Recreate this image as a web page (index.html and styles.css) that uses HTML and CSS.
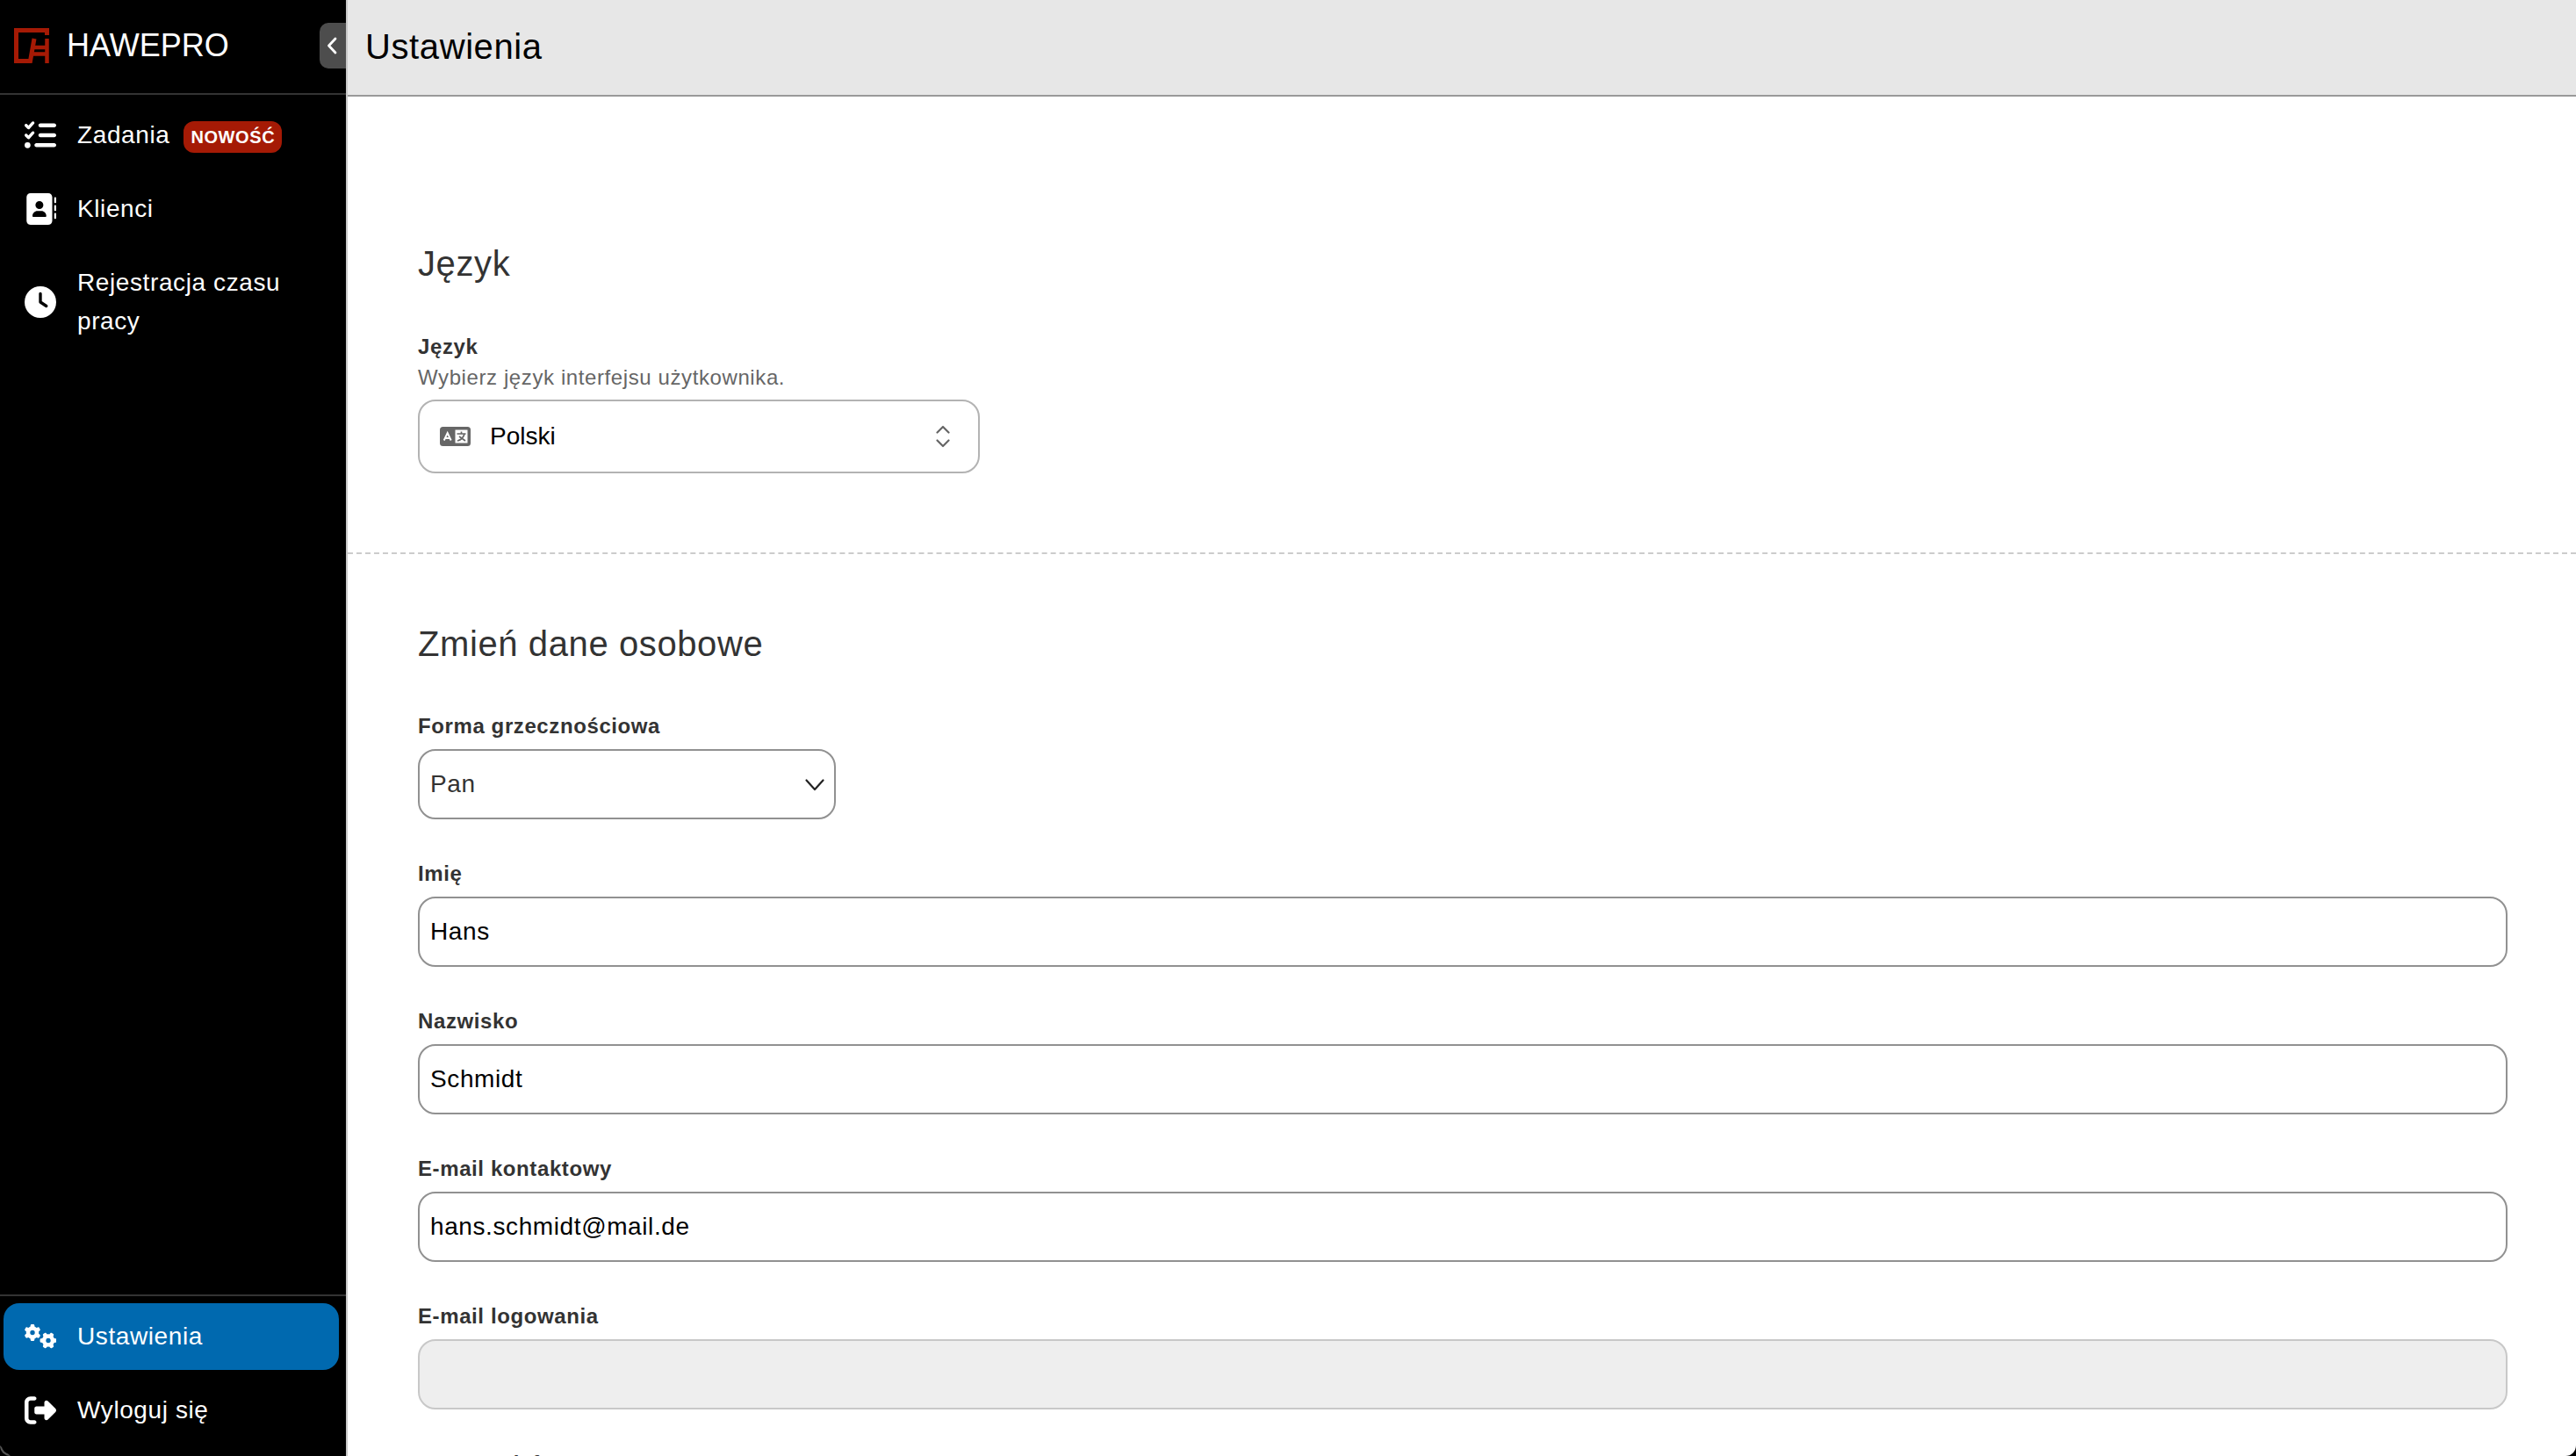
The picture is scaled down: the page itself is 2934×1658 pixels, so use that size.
FILE: index.html
```html
<!DOCTYPE html>
<html lang="pl">
<head>
    <meta charset="UTF-8">
    <meta name="viewport" content="width=device-width, initial-scale=1.0">
    <title>Ustawienia - HAWEPRO</title>
    <link rel="stylesheet" href="styles.css">
</head>
<body>
    <div class="app">
        <aside class="sidebar">
            <div class="brand">
                <svg class="logo" viewBox="0 0 40 40" fill="none" stroke="currentColor" stroke-width="5">
                    <path d="M37.5 8V2.5H2.5v35h16l4.5-25.5"/>
                    <path d="M37.5 12v28M21 22h16M20 29.500h17" stroke-width="4.500"/>
                </svg>
                <span class="brand-name">HAWEPRO</span>
                <button class="toggle" type="button" aria-label="Zwiń menu">
                    <svg viewBox="0 0 12 20" fill="none" stroke="currentColor" stroke-width="2.800" stroke-linecap="round" stroke-linejoin="round"><path d="M10 2L2.500 10l7.500 8"/></svg>
                </button>
            </div>
            <nav class="nav">
                <a class="nav-item" href="#">
                    <svg class="nav-icon" viewBox="0 0 512 512" fill="currentColor"><path d="M152.1 38.2c9.9 8.9 10.7 24 1.8 33.9l-72 80c-4.4 4.9-10.6 7.8-17.2 7.900s-12.900-2.400-17.600-7L7 113C-2.300 103.600-2.300 88.400 7 79s24.600-9.400 33.900 0l22.100 22.100 55.100-61.200c8.900-9.900 24-10.700 33.900-1.800zm0 160c9.900 8.900 10.700 24 1.800 33.900l-72 80c-4.400 4.900-10.600 7.800-17.200 7.900s-12.900-2.400-17.600-7L7 273c-9.400-9.400-9.400-24.600 0-33.900s24.600-9.400 33.900 0l22.100 22.100 55.100-61.200c8.900-9.900 24-10.700 33.900-1.800zM224 96c0-17.700 14.300-32 32-32H480c17.700 0 32 14.300 32 32s-14.300 32-32 32H256c-17.700 0-32-14.300-32-32zm0 160c0-17.700 14.300-32 32-32H480c17.700 0 32 14.300 32 32s-14.300 32-32 32H256c-17.700 0-32-14.300-32-32zM160 416c0-17.700 14.300-32 32-32H480c17.700 0 32 14.300 32 32s-14.300 32-32 32H192c-17.700 0-32-14.300-32-32zM48 368a48 48 0 1 1 0 96 48 48 0 1 1 0-96z"/></svg>
                    <span>Zadania</span>
                    <span class="badge">NOWOŚĆ</span>
                </a>
                <a class="nav-item" href="#">
                    <svg class="nav-icon" viewBox="0 0 512 512" fill="currentColor"><path d="M96 0C60.700 0 32 28.700 32 64V448c0 35.300 28.700 64 64 64H384c35.300 0 64-28.700 64-64V64c0-35.300-28.700-64-64-64H96zM208 288h64c44.200 0 80 35.800 80 80c0 8.800-7.200 16-16 16H144c-8.800 0-16-7.200-16-16c0-44.200 35.800-80 80-80zm-32-96a64 64 0 1 1 128 0 64 64 0 1 1 -128 0zM512 80c0-8.800-7.200-16-16-16s-16 7.200-16 16v64c0 8.800 7.200 16 16 16s16-7.200 16-16V80zM496 192c-8.800 0-16 7.200-16 16v64c0 8.800 7.200 16 16 16s16-7.200 16-16V208c0-8.800-7.200-16-16-16zm16 144c0-8.800-7.200-16-16-16s-16 7.200-16 16v64c0 8.800 7.200 16 16 16s16-7.200 16-16V336z"/></svg>
                    <span>Klienci</span>
                </a>
                <a class="nav-item" href="#">
                    <svg class="nav-icon" viewBox="0 0 512 512" fill="currentColor"><path d="M256 0a256 256 0 1 1 0 512A256 256 0 1 1 256 0zM232 120V256c0 8 4 15.500 10.700 20l96 64c11 7.400 25.900 4.400 33.300-6.700s4.400-25.900-6.700-33.300L280 243.200V120c0-13.300-10.700-24-24-24s-24 10.700-24 24z"/></svg>
                    <span>Rejestracja czasu pracy</span>
                </a>
            </nav>
            <nav class="nav nav-bottom">
                <a class="nav-item active" href="#">
                    <svg class="nav-icon" viewBox="0 0 640 512" fill="currentColor">
                        <defs>
                            <path id="gear" d="M308.500 135.300c7.100-6.300 9.900-16.200 6.200-25c-2.300-5.300-4.800-10.500-7.600-15.500L304 89.400c-3-5-6.300-9.900-9.800-14.600c-5.700-7.600-15.700-10.100-24.700-7.100l-28.200 9.300c-10.700-8.800-23-16-36.200-20.900L199 27.100c-1.900-9.300-9.100-16.700-18.500-17.800C173.900 8.400 167.200 8 160.400 8h-.7c-6.800 0-13.500 .4-20.100 1.200c-9.400 1.100-16.600 8.600-18.500 17.800L115 56.100c-13.300 5-25.500 12.100-36.200 20.900L50.500 67.800c-9-3-19-.5-24.700 7.100c-3.500 4.700-6.800 9.600-9.900 14.600l-3 5.300c-2.800 5-5.300 10.200-7.600 15.600c-3.700 8.700-.9 18.600 6.200 25l22.200 19.800C32.600 161.900 32 168.900 32 176s.6 14.100 1.700 20.900L11.500 216.700c-7.100 6.300-9.900 16.200-6.200 25c2.300 5.300 4.800 10.500 7.600 15.600l3 5.200c3 5.100 6.300 9.900 9.900 14.600c5.700 7.600 15.700 10.100 24.700 7.100l28.200-9.300c10.700 8.800 23 16 36.200 20.900l6.100 29.100c1.900 9.300 9.100 16.700 18.500 17.800c6.700 .8 13.500 1.200 20.400 1.200s13.700-.4 20.400-1.200c9.400-1.100 16.600-8.600 18.500-17.800l6.100-29.100c13.300-5 25.500-12.100 36.200-20.900l28.200 9.300c9 3 19 .5 24.700-7.100c3.500-4.700 6.800-9.500 9.800-14.600l3.100-5.400c2.800-5 5.300-10.200 7.600-15.500c3.700-8.700 .9-18.600-6.200-25l-22.200-19.800c1.100-6.800 1.700-13.800 1.700-20.900s-.6-14.100-1.700-20.900l22.200-19.800zM112 176a48 48 0 1 1 96 0 48 48 0 1 1 -96 0z"/>
                        </defs>
                        <use href="#gear"/>
                        <use href="#gear" transform="translate(480 336) rotate(90) translate(-160 -176)"/>
                    </svg>
                    <span>Ustawienia</span>
                </a>
                <a class="nav-item" href="#">
                    <svg class="nav-icon" viewBox="0 0 512 512" fill="currentColor"><path d="M377.900 105.900L500.700 228.700c7.200 7.200 11.300 17.100 11.300 27.300s-4.100 20.100-11.300 27.300L377.900 406.100c-6.400 6.400-15 9.900-24 9.900c-18.700 0-33.900-15.200-33.900-33.900l0-62.100-128 0c-17.700 0-32-14.300-32-32l0-64c0-17.700 14.300-32 32-32l128 0 0-62.100c0-18.700 15.200-33.900 33.900-33.900c9 0 17.600 3.600 24 9.900zM160 96L96 96c-17.700 0-32 14.300-32 32l0 256c0 17.700 14.300 32 32 32l64 0c17.700 0 32 14.300 32 32s-14.300 32-32 32l-64 0c-53 0-96-43-96-96L0 128C0 75 43 32 96 32l64 0c17.700 0 32 14.300 32 32s-14.300 32-32 32z"/></svg>
                    <span>Wyloguj się</span>
                </a>
            </nav>
        </aside>

        <main class="main">
            <header class="topbar">
                <h1>Ustawienia</h1>
            </header>

            <section class="section section-language">
                <h2>Język</h2>
                <div class="field">
                    <div class="label">Język</div>
                    <div class="hint">Wybierz język interfejsu użytkownika.</div>
                    <button class="lang-select" type="button">
                        <svg class="lang-icon" viewBox="0 0 35 22">
                            <rect width="35" height="22" rx="3.500" fill="#666"/>
                            <rect x="17.500" y="3.500" width="14" height="15" fill="#fff"/>
                            <path d="M4.700 15.500L8.700 7l4 8.500M6 13h5.400" fill="none" stroke="#fff" stroke-width="2"/>
                            <path d="M19.500 8h10M24.500 5.500V8M28 8c-1 4-4 7-8 8M22 11l7 5" fill="none" stroke="#666" stroke-width="1.700"/>
                        </svg>
                        <span>Polski</span>
                        <svg class="lang-arrows" viewBox="0 0 16 26" fill="none" stroke="#666" stroke-width="2.200" stroke-linecap="round" stroke-linejoin="round"><path d="M1.500 8.500L8 2l6.500 6.500M1.500 17.500L8 24l6.500-6.500"/></svg>
                    </button>
                </div>
            </section>

            <section class="section">
                <h2>Zmień dane osobowe</h2>
                <div class="field">
                    <div class="label">Forma grzecznościowa</div>
                    <div class="input select">
                        <span>Pan</span>
                        <svg class="select-arrow" viewBox="0 0 22 14" fill="none" stroke="#222" stroke-width="2.200" stroke-linecap="round" stroke-linejoin="round"><path d="M1.500 1.500L11 12l9.500-10.500"/></svg>
                    </div>
                </div>
                <div class="field">
                    <label class="label" for="firstName">Imię</label>
                    <input class="input" id="firstName" type="text" value="Hans">
                </div>
                <div class="field">
                    <label class="label" for="lastName">Nazwisko</label>
                    <input class="input" id="lastName" type="text" value="Schmidt">
                </div>
                <div class="field">
                    <label class="label" for="contactEmail">E-mail kontaktowy</label>
                    <input class="input" id="contactEmail" type="text" value="hans.schmidt@mail.de">
                </div>
                <div class="field">
                    <label class="label" for="loginEmail">E-mail logowania</label>
                    <input class="input" id="loginEmail" type="text" disabled>
                </div>
                <div class="field">
                    <label class="label" for="phone">Numer telefonu</label>
                    <input class="input" id="phone" type="text">
                </div>
            </section>
        </main>
    </div>
</body>
</html>
```
FILE: styles.css
```css
* {
    box-sizing: border-box;
}
body {
    margin: 0;
    background-color: #000;
    font-family: "Liberation Sans", Arial, Helvetica, sans-serif;
    font-size: 28px;
    letter-spacing: 0.6px;
    color: #333;
}
.app {
    display: flex;
    height: 100vh;
    overflow: hidden;
}

/* Sidebar */
.sidebar {
    position: relative;
    display: flex;
    flex-direction: column;
    flex: 0 0 396px;
    background-color: #000;
    border-right: 2px solid #c8c8c8;
    color: #fff;
}
/* rounded window corner */
.sidebar::after {
    content: "";
    position: absolute;
    left: 0;
    bottom: 0;
    width: 12px;
    height: 12px;
    border-left: 2px solid #555;
    border-bottom: 2px solid #555;
    border-bottom-left-radius: 12px;
    clip-path: polygon(0 15%, 85% 100%, 0 100%);
}
.brand {
    display: flex;
    align-items: center;
    height: 108px;
    padding: 0 0 2px 16px;
    border-bottom: 2px solid #333;
}
.logo {
    width: 40px;
    height: 40px;
    margin-right: 20px;
    color: #a51a05;
}
.brand-name {
    font-size: 36px;
    line-height: 48px;
    margin-top: -1px;
    letter-spacing: 0;
}
.toggle {
    display: flex;
    align-items: center;
    width: 30px;
    height: 52px;
    margin-left: auto;
    padding: 0 0 0 8px;
    border: none;
    border-radius: 10px 0 0 10px;
    background-color: #4d4d4d;
    color: #fff;
}
.toggle svg {
    width: 12px;
    height: 20px;
}
.nav {
    display: flex;
    flex-direction: column;
    gap: 8px;
    padding: 8px 8px 8px 4px;
}
.nav-bottom {
    margin-top: auto;
    padding-bottom: 14px;
    border-top: 2px solid #333;
}
.nav-item {
    display: flex;
    align-items: center;
    padding: 16px 24px;
    border-radius: 18px;
    color: #fff;
    line-height: 44px;
    text-decoration: none;
}
.nav-item.active {
    background-color: #0069af;
}
.nav-icon {
    flex: none;
    width: 36px;
    height: 36px;
    margin-right: 24px;
}
.badge {
    margin: 4px 0 0 16px;
    padding: 0 8px;
    border-radius: 12px;
    background-color: #a51a05;
    font-size: 20px;
    font-weight: bold;
    line-height: 36px;
}

/* Content */
.main {
    flex: 1;
    min-width: 0;
    overflow: hidden;
    background-color: #fff;
    border-bottom-right-radius: 12px;
}
.topbar {
    height: 110px;
    padding-left: 20px;
    background-color: #e7e7e7;
    border-bottom: 2px solid #999;
    color: #000;
}
h1, h2 {
    margin: 0;
    font-size: 40px;
    font-weight: normal;
}
h1 {
    line-height: 106px;
}
.section {
    padding: 80px 78px 80px 80px;
}
.section-language {
    padding-top: 168px;
    padding-bottom: 90px;
    border-bottom: 2px dashed #ccc;
}
h2 {
    margin-bottom: 54px;
    line-height: 44px;
}
.field + .field {
    margin-top: 44px;
}
.label {
    display: block;
    margin-bottom: 8px;
    font-size: 24px;
    font-weight: bold;
    line-height: 36px;
}
.section-language .label {
    margin: 55px 0 -1px;
}
.section-language h2 {
    margin-bottom: 0;
}
.hint {
    margin-bottom: 7px;
    color: #666;
    font-size: 24px;
    line-height: 36px;
}
.input {
    display: block;
    width: 100%;
    height: 80px;
    padding: 0 12px;
    border: 2px solid #919191;
    border-radius: 20px;
    background-color: #fff;
    color: #000;
    font-family: inherit;
    font-size: 28px;
    letter-spacing: inherit;
}
.input:disabled {
    border-color: #c8c8c8;
    background-color: #eee;
}
.select {
    display: flex;
    align-items: center;
    justify-content: space-between;
    width: 476px;
    padding-right: 11px;
    color: #333;
}
.select-arrow {
    width: 22px;
    height: 14px;
    margin-top: 2px;
}
.lang-select {
    display: flex;
    align-items: center;
    width: 640px;
    height: 84px;
    padding: 0 32px 0 23px;
    border: 2px solid #b3b3b3;
    border-radius: 20px;
    background-color: #fff;
    color: #000;
    font-family: inherit;
    font-size: 28px;
}
.lang-icon {
    width: 35px;
    height: 22px;
    margin-right: 22px;
}
.lang-arrows {
    width: 16px;
    height: 26px;
    margin-left: auto;
}
```
